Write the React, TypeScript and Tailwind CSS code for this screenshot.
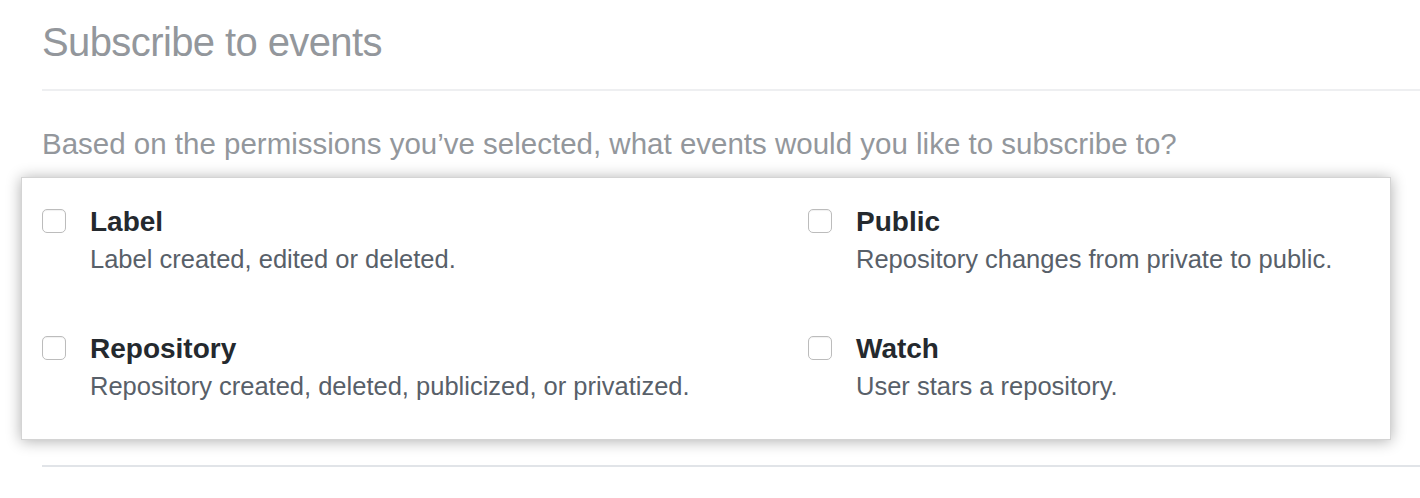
const events = [
  { name: "Label", desc: "Label created, edited or deleted." },
  { name: "Public", desc: "Repository changes from private to public." },
  { name: "Repository", desc: "Repository created, deleted, publicized, or privatized." },
  { name: "Watch", desc: "User stars a repository." },
];

function EventOption({ name, desc }: { name: string; desc: string }) {
  return (
    <label className="flex items-start">
      <span className="mt-[4px] mr-[24px] h-[24px] w-[24px] shrink-0 rounded-[5px] border border-[#bcbcbc] bg-white shadow-[inset_0_1px_1px_rgba(0,0,0,0.06)]" />
      <span className="flex flex-col">
        <span className="text-[28px] leading-[34px] font-bold text-[#24292e]">{name}</span>
        <span className="mt-[3px] text-[25.5px] leading-[34px] text-[#586069]">{desc}</span>
      </span>
    </label>
  );
}

export default function App() {
  return (
    <div
      className="min-h-[498px] w-[1420px] bg-white pl-[42px] pt-[18px]"
      style={{ fontFamily: '"Liberation Sans", Arial, sans-serif' }}
    >
      <h1 className="text-[40px] leading-[48px] font-normal tracking-[-0.6px] text-[#93979c]">
        Subscribe to events
      </h1>
      <div className="mt-[23px] h-[2px] bg-[#eeeff1]" />

      <p className="mt-[35px] text-[29.5px] leading-[36px] text-[#93979c]">
        Based on the permissions you’ve selected, what events would you like to subscribe to?
      </p>

      {/* Events card */}
      <div className="mt-[15px] -ml-[21px] mr-[29px] border border-[#d4d4d4] bg-white pt-[27px] pb-[36px] pl-[20px] shadow-[0_1px_14px_rgba(0,0,0,0.32)]">
        <div className="grid grid-cols-[766px_1fr] gap-y-[56px]">
          {events.map((e) => (
            <EventOption key={e.name} name={e.name} desc={e.desc} />
          ))}
        </div>
      </div>

      <div className="mt-[25px] h-[2px] bg-[#e1e4e8]" />
    </div>
  );
}
